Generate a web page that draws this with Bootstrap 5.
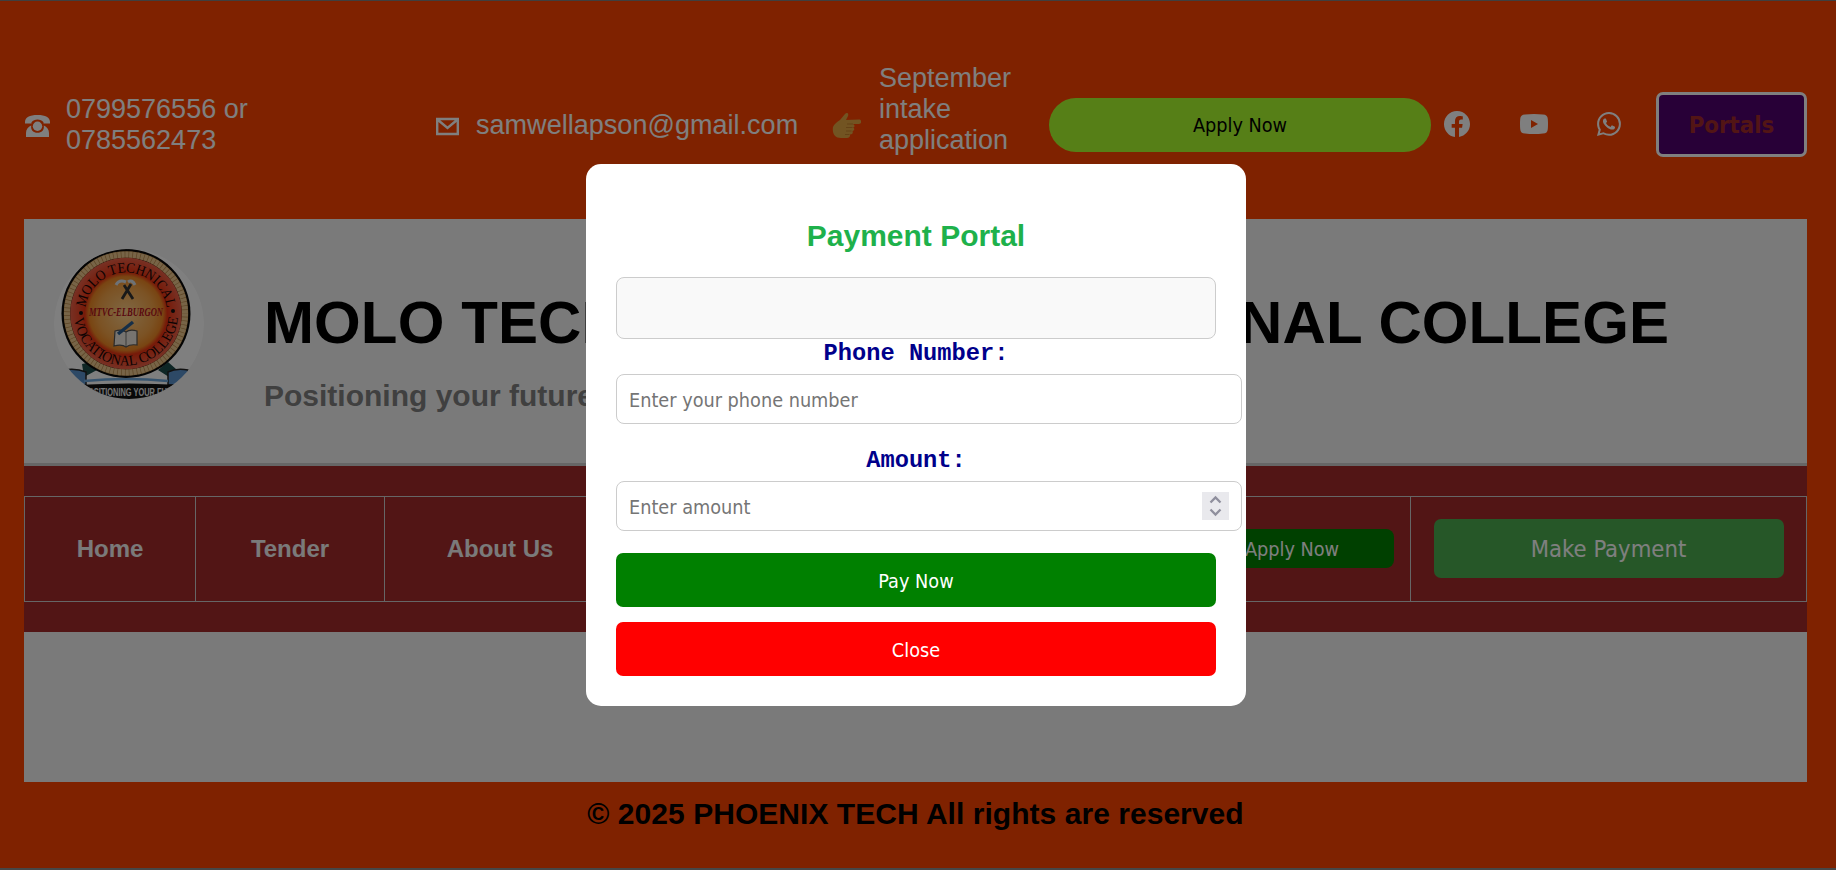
<!DOCTYPE html>
<html lang="en">
<head>
<meta charset="utf-8">
<title>Molo Technical and Vocational College</title>
<link rel="stylesheet" href="https://cdn.jsdelivr.net/npm/bootstrap@5.3.0/dist/css/bootstrap.min.css">
<style>
body{background:#ff4500;font-family:"Liberation Sans",Arial,sans-serif;height:870px;overflow:hidden;border-top:1px solid #7f7f7f;border-bottom:2px solid #8f8f8f;color:#000}
.page-wrap{width:1783px;margin-left:24px}
.topbar{height:218px;display:grid;grid-template-columns:409px 397px 219px 382px 225px 151px;color:#fff;font-size:27px;line-height:31px;padding-top:61px;align-items:start}
.topbar>*{display:flex;align-items:center}
.phone-item,.mail-item,.social-item{height:124px}
.phone-text{width:200px;margin:2px 0 0 15px}
.mail-text{margin:2px 0 0 14px;letter-spacing:.03px}
.intake-item{height:93px}
.intake-text{width:130px;margin:2px 0 0 18px}
.ui-font{font-family:"DejaVu Sans Condensed","DejaVu Sans",sans-serif;font-stretch:condensed;font-size:19.7px}
.flat-btn{border:0;padding:0;display:flex;align-items:center;justify-content:center;line-height:1.2;font-weight:400}
.apply-pill{height:54px;background:#adff2f;border-radius:27px;margin-top:36px;color:#000;padding-top:2px}
.portal-btn{height:65px;margin-top:30px;background:#50006e;border:3px solid #fff;border-radius:7px;color:#a52a2a;font-weight:700;font-size:23.8px;padding-top:1px}
.brand{height:247px;background:#f5f5f5;border-bottom:3px solid #cdcdcd;padding:30px 0 0 30px}
.brand h1{font-size:60px;font-weight:700;line-height:68px;margin:40px 0 22px;white-space:nowrap;letter-spacing:.11px}
.brand h2{font-size:30px;font-weight:700;line-height:34px;color:#808080;margin:0}
.brand-text{margin-left:60px;margin-top:0}
.menu-band{background:#a52a2a;height:166px;padding:30px 0}
.menu-row{height:106px;display:grid;grid-template-columns:171px 189px 231px 200px 200px 395px 1fr;border:1px solid #cdcdcd}
.menu-row>a{display:flex;align-items:center;justify-content:center;color:#f5f5f5;font-size:24px;font-weight:700;text-decoration:none;border-right:1px solid #cdcdcd;white-space:nowrap}
.menu-row>a:last-child{border-right:0}
.menu-apply{width:204px;height:39px;background:#008000;border-radius:8px;color:#fff;padding-top:2px;margin-top:-1px}
.menu-pay{width:350px;height:59px;background:#4caf50;border-radius:7px;color:#fff;font-size:23.6px;padding-top:2px;margin-top:-1px}
.main-area{height:150px;background:#f5f5f5}
.foot{font-size:30px;font-weight:700;line-height:34px;padding-top:15px;text-align:center;letter-spacing:.04px}
.shade{position:fixed;inset:0;background:rgba(0,0,0,.5);z-index:5}
.pay-dialog{width:660px;height:542px;margin:164px 0 0 586px;background:#fff;border-radius:15px;padding:30px}
.pay-dialog h2{font-size:30px;font-weight:700;line-height:34px;color:#1eb14b;text-align:center;margin:25px 0 24px}
.result-box{height:62px;background:#f9f9f9;border:1px solid #ccc;border-radius:8px}
.field-label{display:block;height:28px;line-height:28px;padding-top:1px;margin-bottom:7px;font-family:"Courier New","Liberation Mono",monospace;font-weight:700;font-size:23.7px;color:#00008b;text-align:center}
.amount-label{margin-top:22px}
.pay-dialog input.form-control{width:626px;height:50px;border:1px solid #ccc;border-radius:8px;padding:2px 12px 0;color:#000}
.pay-dialog input::placeholder{color:#757575;opacity:1}
.spin{position:absolute;left:586px;top:11px;width:27px;height:28px}
.pay-dialog .flat-btn{width:600px;height:54px;border-radius:7px;color:#fff;padding-top:4px}
.pay-dialog .go{background:#008000;margin-top:22px}
.pay-dialog .stop{background:#f00;margin-top:15px}
</style>
</head>
<body>
<div class="page-wrap">
<header class="topbar">
  <div class="phone-item">
    <svg class="mt-1" width="27" height="24" viewBox="0 0 27 24" fill="#fff"><path d="M1 9.500V8C1 3.500 5.500 1 13.500 1S26 3.500 26 8v1.500h-6.500V8.300C18 6.500 16 5.600 13.500 5.600S9 6.500 7.500 8.300v1.200z"/><circle cx="13.500" cy="12.200" r="4.700"/><path d="M7.200 11.400C4 12.500 2 15.500 2 19v4h23v-4c0-3.500-2-6.500-5.200-7.600.6 5-2.300 7.300-6.300 7.300s-6.900-2.300-6.300-7.300z"/></svg>
    <div class="phone-text">0799576556 or 0785562473</div>
  </div>
  <div class="mail-item">
    <svg class="mt-1" width="29" height="19" viewBox="0 0 29 19" fill="none" stroke="#fff" stroke-width="2.400"><path d="M4.200 2h20.600v15H4.200zM5 3l9.500 8L24 3"/></svg>
    <span class="mail-text">samwellapson@gmail.com</span>
  </div>
  <div class="intake-item">
    <svg width="29" height="28" viewBox="0 0 29 28" style="margin:34px 0 0 2px"><path d="M1 15c1-3 4-5 7-7l5-6c2-2 4-.5 3 2l-2 4 13-.5c3 0 3 4.500 0 4.500h-6c2 1 2 3 0 3.500 2 1 1.500 3.200-.5 3.500 1 2-.5 3.500-2.500 3.500.5 2-1 3.500-3 3.500H9c-6 0-9-4-8-11z" fill="#e5a844"/><path d="M15 12h6M14 15.500h6.500M14 19h5.500M13 22.500h4.500" stroke="#c9842e" stroke-width="1"/></svg>
    <span class="intake-text">September intake application</span>
  </div>
  <button class="flat-btn ui-font apply-pill">Apply Now</button>
  <div class="social-item" style="padding-left:13px">
    <svg width="26" height="26" viewBox="0 0 16 16" fill="#fff"><path d="M16 8.049c0-4.446-3.582-8.050-8-8.050C3.580 0-.002 3.603-.002 8.050c0 4.017 2.926 7.347 6.750 7.951v-5.625h-2.030V8.050H6.750V6.275c0-2.017 1.195-3.131 3.022-3.131.876 0 1.791.157 1.791.157v1.980h-1.009c-.993 0-1.303.621-1.303 1.258v1.510h2.218l-.354 2.326H9.250V16c3.824-.604 6.750-3.934 6.750-7.951"/></svg>
    <svg width="28" height="20" viewBox="0 0 28 20" style="margin-left:50px"><path fill="#fff" fill-rule="evenodd" d="M5 .5Q14-.5 23 .5q4.500 0 4.800 4.500.4 5 0 10Q27.500 19.500 23 19.500q-9 1-18 0Q.5 19.500.2 15q-.4-5 0-10Q.5.500 5 .5zM11 6v8l7-4z"/></svg>
    <svg width="24" height="24" viewBox="0 0 16 16" fill="#fff" style="margin-left:49px"><path d="M13.601 2.326A7.854 7.854 0 0 0 7.994 0C3.627 0 .068 3.558.064 7.926c0 1.399.366 2.760 1.057 3.965L0 16l4.204-1.102a7.933 7.933 0 0 0 3.790.965h.004c4.368 0 7.926-3.558 7.930-7.930A7.898 7.898 0 0 0 13.600 2.326zM7.994 14.521a6.573 6.573 0 0 1-3.356-.920l-.240-.144-2.494.654.666-2.433-.156-.251a6.560 6.560 0 0 1-1.007-3.505c0-3.626 2.957-6.584 6.591-6.584a6.560 6.560 0 0 1 4.660 1.931 6.557 6.557 0 0 1 1.928 4.660c-.004 3.639-2.961 6.592-6.592 6.592zm3.615-4.934c-.197-.099-1.170-.578-1.353-.646-.182-.065-.315-.099-.445.099-.133.197-.513.646-.627.775-.114.133-.232.148-.430.050-.197-.100-.836-.308-1.592-.985-.590-.525-.985-1.175-1.103-1.372-.114-.198-.011-.304.088-.403.087-.088.197-.232.296-.346.100-.114.133-.198.198-.330.065-.134.034-.248-.015-.347-.050-.099-.445-1.076-.612-1.470-.160-.389-.323-.335-.445-.340-.114-.007-.247-.007-.380-.007a.729.729 0 0 0-.529.247c-.182.198-.691.677-.691 1.654 0 .977.710 1.916.810 2.049.098.133 1.394 2.132 3.383 2.992.470.205.840.326 1.129.418.475.152.904.129 1.246.080.380-.058 1.171-.480 1.338-.943.164-.464.164-.860.114-.943-.049-.084-.182-.133-.380-.232z"/></svg>
  </div>
  <button class="flat-btn ui-font portal-btn">Portals</button>
</header>

<section class="brand d-flex align-items-start">
  <svg width="150" height="150" viewBox="0 0 150 150" class="flex-shrink-0">
    <defs>
      <clipPath id="round"><circle cx="75" cy="75" r="75"/></clipPath>
      <radialGradient id="core"><stop offset="0" stop-color="#ffd08a"/><stop offset=".5" stop-color="#f7a548"/><stop offset=".66" stop-color="#f28a25"/><stop offset=".74" stop-color="#ee3412"/><stop offset="1" stop-color="#ef6248"/></radialGradient>
      <path id="arcTop" d="M31 64.500a41 41 0 1 1 82 0"/>
      <path id="arcLow" d="M20 64.500a52 52 0 1 0 104 0"/>
    </defs>
    <g clip-path="url(#round)">
      <circle cx="75" cy="75" r="75" fill="#fff"/>
      <path d="M28 115l10-2 5 8-13 7zM104 121l10-8 8 7-7 8z" fill="#1d4c4a"/>
      <path d="M10 121q12-2 22 2v13H12zM134 121q-12-2-20 2v13h20z" fill="#5b92cc" stroke="#222" stroke-width="1.500"/>
      <path d="M30 132q43-4 84 0" stroke="#6ea8dd" stroke-width="2.500" fill="none"/>
      <path d="M22 136q53-3 106 0v14H22z" fill="#111"/>
      <circle cx="72" cy="64.500" r="64.500" fill="#090909"/>
      <circle cx="72" cy="64.500" r="59" fill="none" stroke="#b98a4a" stroke-width="6.500"/>
      <circle cx="72" cy="64.500" r="59" fill="none" stroke="#efc88e" stroke-width="6" stroke-dasharray="3.200 .7"/>
      <circle cx="72" cy="64.500" r="55.800" fill="url(#core)"/>
      <g font-family="Liberation Serif,serif" font-size="14.500" fill="#190606">
        <text textLength="117" lengthAdjust="spacingAndGlyphs"><textPath href="#arcTop" startOffset="6">MOLO TECHNICAL</textPath></text>
        <text textLength="154" lengthAdjust="spacingAndGlyphs"><textPath href="#arcLow" startOffset="5">VOCATIONAL COLLEGE</textPath></text>
      </g>
      <circle cx="27" cy="64" r="2" fill="#111"/><circle cx="119" cy="62" r="2" fill="#111"/>
      <text x="35" y="67" textLength="74" lengthAdjust="spacingAndGlyphs" font-family="Liberation Serif,serif" font-style="italic" font-weight="700" font-size="11.500" fill="#b5101e">MTVC-ELBURGON</text>
      <path d="M70 36l9 14M77 35l-9 15" stroke="#333" stroke-width="2.800"/><path d="M62 36q3-6 10-3M74 33q4-3 7 3" stroke="#dde5ec" stroke-width="3" fill="none"/>
      <path d="M61 82q7-2 11 1 4-3 11-1v14q-7-1-11 2-4-3-12-1z" fill="#efe9e0" stroke="#555" stroke-width="1.200"/><path d="M72 83v14" stroke="#777"/><path d="M64 85l15-12" stroke="#2d5f91" stroke-width="3.500"/>
      <text x="29" y="147" textLength="104" lengthAdjust="spacingAndGlyphs" font-family="Liberation Sans,sans-serif" font-weight="700" font-size="11.500" fill="#eee">POSITIONING YOUR FUTURE</text>
    </g>
  </svg>
  <div class="brand-text">
    <h1>MOLO TECHNICAL AND VOCATIONAL COLLEGE</h1>
    <h2>Positioning your future</h2>
  </div>
</section>

<nav class="menu-band">
  <div class="menu-row">
    <a href="#">Home</a><a href="#">Tender</a><a href="#">About Us</a><a href="#"></a><a href="#"></a>
    <a href="#" class="justify-content-end pe-3"><span class="flat-btn ui-font menu-apply">Apply Now</span></a>
    <a href="#"><span class="flat-btn ui-font menu-pay">Make Payment</span></a>
  </div>
</nav>
<main class="main-area"></main>
<footer class="foot">© 2025 PHOENIX TECH All rights are reserved</footer>
</div>

<div class="shade">
  <div class="pay-dialog">
    <h2>Payment Portal</h2>
    <div class="result-box"></div>
    <label class="field-label" for="phone">Phone Number:</label>
    <input id="phone" class="form-control ui-font" placeholder="Enter your phone number">
    <label class="field-label amount-label" for="amount">Amount:</label>
    <div class="position-relative">
      <input id="amount" class="form-control ui-font" placeholder="Enter amount">
      <svg class="spin" viewBox="0 0 27 28"><path d="M0 0h27v28H0z" fill="#e9e9ed"/><path d="M8.500 10.500l5-5 5 5M8.500 17.500l5 5 5-5" fill="none" stroke="#8f8f9d" stroke-width="2.300"/></svg>
    </div>
    <button class="flat-btn ui-font go">Pay Now</button>
    <button class="flat-btn ui-font stop">Close</button>
  </div>
</div>
<script src="https://cdn.jsdelivr.net/npm/bootstrap@5.3.0/dist/js/bootstrap.bundle.min.js"></script>
</body>
</html>
